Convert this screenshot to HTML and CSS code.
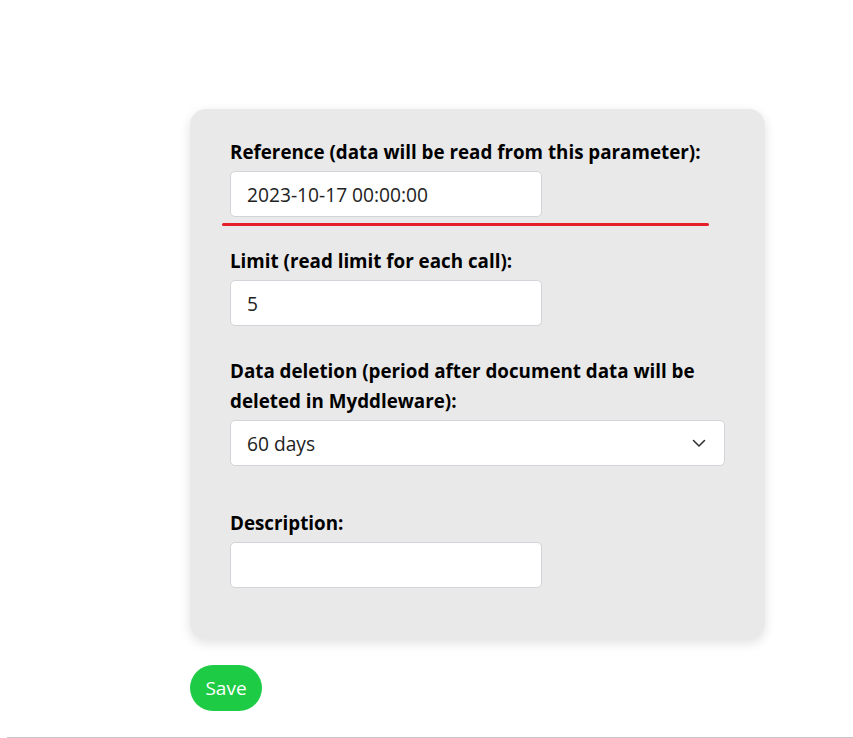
FILE: index.html
```html
<!DOCTYPE html>
<html>
<head>
<meta charset="utf-8">
<link rel="stylesheet" href="styles.css">
</head>
<body>
<div class="page">
  <form class="card">
    <div class="group g1">
      <label class="lbl">Reference (data will be read from this parameter):</label>
      <div class="field short">2023-10-17 00:00:00</div>
      <div class="redline"></div>
    </div>
    <div class="group g2">
      <label class="lbl">Limit (read limit for each call):</label>
      <div class="field short">5</div>
    </div>
    <div class="group g3">
      <label class="lbl">Data deletion (period after document data will be deleted in Myddleware):</label>
      <div class="field long select">
        <span>60 days</span>
        <svg class="chev" width="14" height="9" viewBox="0 0 14 9"><path d="M1.5 1.5 L7 7 L12.5 1.5" fill="none" stroke="#333" stroke-width="1.6" stroke-linecap="round" stroke-linejoin="round"/></svg>
      </div>
    </div>
    <div class="group g4">
      <label class="lbl">Description:</label>
      <div class="field short"></div>
    </div>
  </form>
  <button class="save" type="button">Save</button>
</div>
<div class="rule"></div>
</body>
</html>
```
FILE: styles.css
```css
html, body {
  margin: 0;
  padding: 0;
  background: #fff;
}
body {
  font-family: "Open Sans", "Noto Sans", sans-serif;
  color: #000;
}
.page {
  padding: 109px 0 0 190px;
  display: flex;
  flex-direction: column;
  align-items: flex-start;
}
.card {
  width: 575px;
  box-sizing: border-box;
  background: #e9e9e9;
  border-radius: 16px;
  padding: 28px 40px 51px 40px;
  box-shadow: 0 4px 12px rgba(0,0,0,0.12);
  display: flex;
  flex-direction: column;
}
.group {
  display: flex;
  flex-direction: column;
  position: relative;
}
.g2 { margin-top: 29px; }
.g3 { margin-top: 30px; }
.g4 { margin-top: 42px; }
.lbl {
  display: block;
  font-weight: 700;
  font-size: 18.8px;
  line-height: 30px;
  margin-bottom: 4px;
  width: 490px;
}
.field {
  box-sizing: border-box;
  height: 46px;
  background: #fff;
  border: 1px solid #d2d4d9;
  border-radius: 5px;
  padding: 0 16px;
  font-size: 19.2px;
  color: #222;
  display: flex;
  align-items: center;
}
.short { width: 312px; }
.long { width: 495px; justify-content: space-between; }
.chev { margin-right: 2px; }
.redline {
  position: absolute;
  left: -8px;
  top: 86px;
  width: 487px;
  height: 3px;
  border-radius: 2px;
  background: #e61e2a;
}
.save {
  margin-top: 26px;
  width: 72px;
  height: 46px;
  border: none;
  border-radius: 23px;
  background: #1ecb45;
  color: #fff;
  font-family: "Open Sans", "Noto Sans", sans-serif;
  font-size: 19px;
  padding: 0;
}
.rule {
  margin: 26px 0 0 7px;
  height: 1px;
  background: #c6c6c6;
}
```
